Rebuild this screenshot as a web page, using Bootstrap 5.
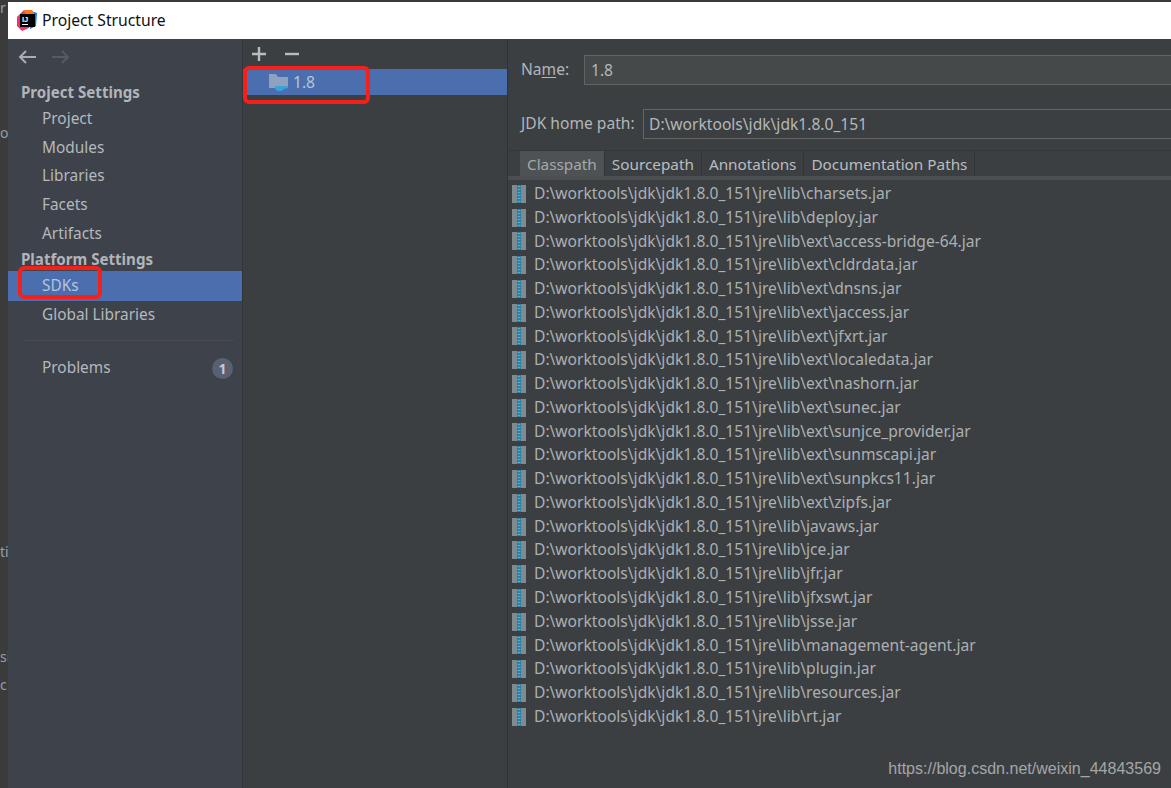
<!DOCTYPE html>
<html lang="en">
<head>
<meta charset="utf-8">
<title>Project Structure</title>
<link href="https://cdn.jsdelivr.net/npm/bootstrap@5.3.0/dist/css/bootstrap.min.css" rel="stylesheet">
<style>
html,body{height:100%;margin:0;overflow:hidden}
body{background:#3a3a3a;font-family:"Noto Sans","Liberation Sans",sans-serif;font-size:15px;color:#b4b9bd;position:relative}
.backstrip{width:8px;flex:none;background:#3b3b3b;overflow:hidden;position:relative}
.dlg{height:788px;padding-top:2px}
.titlebar{height:37px;background:#fff;color:#111;font-size:15.7px;padding-left:9px;gap:5px}
.panes{height:749px;background:#3c3f41}
.side{width:235px;flex:none;background:#3e424b;border-right:1px solid #32353a;font-size:15.4px}
.navrow{height:28.7px;padding-left:34px;line-height:28.7px;white-space:nowrap}
.navhead{padding-left:13px;font-weight:700;font-size:15.1px;color:#b1b5b9;height:24.4px;line-height:23.4px}
.navhead2{height:22.4px;line-height:22.4px}
.navsel{background:#4b6eaf;color:#b7c4d8;height:29.7px;line-height:30.7px}
.histbar{height:33px;padding:11px 0 0 10px;gap:14px}
.sep{height:1px;background:#494b50;margin:11px 8px 13px 15px}
.cnt{width:21px;height:21px;border-radius:50%;background:#596071;color:#c6cad0;font-size:14px;font-weight:700;line-height:21px;text-align:center;margin-right:9px}
.midp{width:265px;flex:none;border-right:1px solid #323232;font-size:15.6px}
.toolb{height:30px;padding:7px 0 0 8px;gap:17px}
.sdkrow{height:26px;background:#4b6eaf;color:#b7c4d8;padding-left:26px;gap:4px;line-height:26px}
.mainp{flex:1;min-width:0;font-size:15.6px}
.fieldrow{padding-left:13px}
.lab{white-space:nowrap;color:#b1b6ba}
.lab u{text-underline-offset:2px}
.nmw{width:63px}
.jdkw{width:122px}
.r1{margin-top:16px}
.r2{margin-top:24px}
.inp{background:#45494a;border:1px solid #646464;color:#b4b8bb;height:30px;line-height:28px;padding-left:6px;flex:1;min-width:0;border-right:0}
.inp2{background:#3c3f41;padding-left:5px}
.tabsb{height:30px;background:#3c3f41;border-top:1px solid #35383a;border-bottom:4px solid #4b4f51;padding-left:12px;margin-top:11px;font-size:15.3px}
.tabi{padding:0 7px;line-height:26px;height:25px;border-right:1px solid #323537;white-space:nowrap;color:#b9bdc0}
.tabon{background:#4e5254;color:#a4a9ac}
.jars{margin:0;padding:2px 0 0 0;list-style:none}
.jars li{height:23.78px;line-height:23.78px;padding-left:4px;gap:8px;white-space:nowrap;color:#abb0b3}
.redmark{position:absolute;border:4px solid #f5201a;border-radius:6px;pointer-events:none}
.rm1{left:243px;top:66px;width:127px;height:38px}
.rm2{left:18px;top:266px;width:84px;height:33px}
.wmark{position:absolute;right:10px;top:756px;font-family:"Liberation Sans",sans-serif;font-size:16.05px;color:#a4a6a8}
.ghost{position:absolute;left:0;font-size:14px;color:#8fa0a8;line-height:16px}
.g1{top:0}.g2{top:125px}.g3{top:544px}.g4{top:649px}.g5{top:677px}
.mt8{margin-top:8.6px}
</style>
</head>
<body>
<div class="d-flex">
  <div class="backstrip dlg">
    <span class="ghost g1">r</span>
    <span class="ghost g2">o</span>
    <span class="ghost g3">ti</span>
    <span class="ghost g4">si</span>
    <span class="ghost g5">c</span>
  </div>
  <div class="flex-grow-1 dlg" style="min-width:0">
    <div class="titlebar d-flex align-items-center">
      <svg width="20" height="21" viewBox="0 0 20 21"><path d="M0 7 6 1l6 1v16l-7 3-5-5z" fill="#f0316b"/><path d="M11 0l9 3-1 13-6 3z" fill="#087cfa"/><path d="M6 0h9l3 5-6 3z" fill="#f97a12"/><rect x="3" y="4" width="15" height="13" fill="#000"/><rect x="5" y="14" width="6" height="1" fill="#fff"/><text x="5" y="11.5" font-size="7.5" font-weight="700" fill="#fff" font-family="Liberation Sans">IJ</text></svg>
      <span>Project Structure</span>
    </div>
    <div class="panes d-flex">
      <nav class="side d-flex flex-column">
        <div class="histbar d-flex">
          <svg width="19" height="14" viewBox="0 0 19 14" fill="none" stroke="#a9adb1" stroke-width="2"><path d="M18 7H2M8 1 2 7l6 6"/></svg>
          <svg width="19" height="14" viewBox="0 0 19 14" fill="none" stroke="#575b60" stroke-width="2"><path d="M1 7h16M11 1l6 6-6 6"/></svg>
        </div>
        <div class="navhead mt8">Project Settings</div>
        <div class="navrow">Project</div>
        <div class="navrow">Modules</div>
        <div class="navrow">Libraries</div>
        <div class="navrow">Facets</div>
        <div class="navrow">Artifacts</div>
        <div class="navhead navhead2">Platform Settings</div>
        <div class="navrow navsel">SDKs</div>
        <div class="navrow">Global Libraries</div>
        <div class="sep"></div>
        <div class="navrow d-flex justify-content-between align-items-center"><span>Problems</span><span class="cnt">1</span></div>
      </nav>
      <section class="midp">
        <div class="toolb d-flex">
          <svg width="16" height="16" viewBox="0 0 16 16" stroke="#b8bcc0" stroke-width="2.4"><path d="M1 8h14M8 1v14"/></svg>
          <svg width="16" height="16" viewBox="0 0 16 16" stroke="#b8bcc0" stroke-width="2.4"><path d="M1 8h14"/></svg>
        </div>
        <div class="sdkrow d-flex align-items-center">
          <svg width="20" height="19" viewBox="0 0 20 19"><path d="M0 1h7l2 3h10v11H0z" fill="#8da2bd"/><path d="M6 13h9v1a4 4 0 0 1-4 4H10a4 4 0 0 1-4-4z" fill="#3aa3dc"/><path d="M15 13h4v2l-4 1z" fill="#3aa3dc"/></svg>
          <span>1.8</span>
        </div>
      </section>
      <main class="mainp">
        <div class="fieldrow d-flex align-items-center r1">
          <span class="lab nmw">Na<u>m</u>e:</span>
          <div class="inp">1.8</div>
        </div>
        <div class="fieldrow d-flex align-items-center r2">
          <span class="lab jdkw">JDK home path:</span>
          <div class="inp inp2">D:\worktools\jdk\jdk1.8.0_151</div>
        </div>
        <div class="tabsb d-flex">
          <div class="tabi tabon">Classpath</div>
          <div class="tabi">Sourcepath</div>
          <div class="tabi">Annotations</div>
          <div class="tabi">Documentation Paths</div>
        </div>
        <ul class="jars" id="jarlist"></ul>
      </main>
    </div>
  </div>
</div>
<div class="redmark rm1"></div>
<div class="redmark rm2"></div>
<div class="wmark">https://blog.csdn.net/weixin_44843569</div>
<script>
const names=["charsets","deploy","ext\\access-bridge-64","ext\\cldrdata","ext\\dnsns","ext\\jaccess","ext\\jfxrt","ext\\localedata","ext\\nashorn","ext\\sunec","ext\\sunjce_provider","ext\\sunmscapi","ext\\sunpkcs11","ext\\zipfs","javaws","jce","jfr","jfxswt","jsse","management-agent","plugin","resources","rt"];
const icon='<svg width="14" height="18" viewBox="0 0 14 18" class="flex-shrink-0"><rect x="0" y="0" width="14" height="18" fill="#7f8b91"/><rect x="5" y="0" width="4" height="18" fill="#2c6f8f"/><path d="M5.5 1.5h3M5.5 4.5h3M5.5 7.5h3M5.5 10.5h3M5.5 13.5h3M5.5 16.5h3" stroke="#40b6e0" stroke-width="1.4"/></svg>';
document.getElementById('jarlist').innerHTML=names.map(n=>'<li class="d-flex align-items-center">'+icon+'<span>D:\\worktools\\jdk\\jdk1.8.0_151\\jre\\lib\\'+n+'.jar</span></li>').join('');
</script>
<script src="https://cdn.jsdelivr.net/npm/bootstrap@5.3.0/dist/js/bootstrap.bundle.min.js"></script>
</body>
</html>
